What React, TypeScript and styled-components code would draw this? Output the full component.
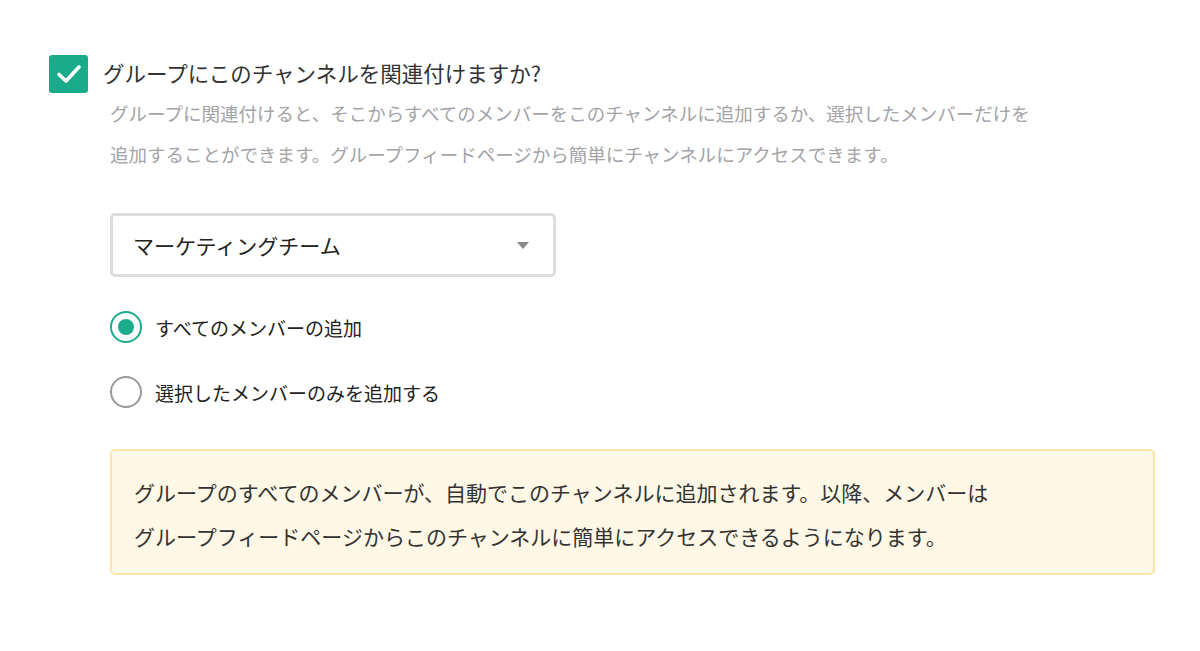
import styled, { createGlobalStyle } from 'styled-components';

const GlobalStyles = createGlobalStyle`
  html, body {
    margin: 0;
    padding: 0;
    background: #ffffff;
  }

  body {
    font-family: "Noto Sans CJK JP", "Noto Sans", sans-serif;
    color: #333333;
  }
`;

const Page = styled.div`
  padding: 55px 0 0 49px;
  width: 1200px;
  box-sizing: border-box;
`;

const TitleRow = styled.label`
  display: flex;
  align-items: center;
  gap: 15px;
`;

const CheckBox = styled.span`
  width: 39px;
  height: 38px;
  border-radius: 3px;
  background: #1aab8b;
  display: flex;
  align-items: center;
  justify-content: center;
  flex-shrink: 0;
`;

const Title = styled.span`
  font-size: 21.5px;
  color: #333333;
  margin-top: -4px;
`;

const Body = styled.div`
  margin-left: 61px;
`;

const Description = styled.p`
  margin: 0;
  font-size: 18.5px;
  line-height: 41px;
  color: #a3a3a8;
`;

const Select = styled.div`
  margin-top: 38px;
  width: 446px;
  height: 64px;
  box-sizing: border-box;
  border: 3px solid #dddddd;
  border-radius: 5px;
  display: flex;
  align-items: center;
  justify-content: space-between;
  padding: 0 24px 0 20px;
  font-size: 21px;
  color: #222222;
`;

const Caret = styled.span`
  width: 0;
  height: 0;
  border-left: 6px solid transparent;
  border-right: 6px solid transparent;
  border-top: 7px solid #888888;
`;

const RadioList = styled.div`
  display: flex;
  flex-direction: column;
  gap: 33px;
  margin-top: 34px;
`;

const RadioRow = styled.label`
  display: flex;
  align-items: center;
  gap: 13px;
  font-size: 19px;
  color: #222222;
`;

const RadioCircle = styled.span<{ $checked?: boolean }>`
  width: 32px;
  height: 32px;
  box-sizing: border-box;
  border-radius: 50%;
  border: 2px solid ${(p) => (p.$checked ? '#1aab8b' : '#9a9a9a')};
  display: flex;
  align-items: center;
  justify-content: center;
  flex-shrink: 0;

  &::after {
    content: '';
    width: 16px;
    height: 16px;
    border-radius: 50%;
    background: #1aab8b;
    display: ${(p) => (p.$checked ? 'block' : 'none')};
  }
`;

const Notice = styled.div`
  margin-top: 41px;
  width: 1045px;
  box-sizing: border-box;
  background: #fff8e6;
  border: 2px solid #f9e6a8;
  border-radius: 5px;
  padding: 19px 22px 15px 22px;
  font-size: 21px;
  line-height: 44px;
  color: #333333;
`;

function CheckIcon() {
  return (
    <svg width="26" height="22" viewBox="0 0 26 22" fill="none">
      <path d="M3 11.5 L10 18 L23 4" stroke="#ffffff" strokeWidth="3.6" strokeLinecap="round" strokeLinejoin="round" />
    </svg>
  );
}

export default function App() {
  return (
    <>
      <GlobalStyles />
      <Page>
        <TitleRow>
          <CheckBox>
            <CheckIcon />
          </CheckBox>
          <Title>グループにこのチャンネルを関連付けますか?</Title>
        </TitleRow>
        <Body>
          <Description>
            グループに関連付けると、そこからすべてのメンバーをこのチャンネルに追加するか、選択したメンバーだけを
            <br />
            追加することができます。グループフィードページから簡単にチャンネルにアクセスできます。
          </Description>

          <Select>
            <span>マーケティングチーム</span>
            <Caret />
          </Select>

          <RadioList>
            <RadioRow>
              <RadioCircle $checked />
              すべてのメンバーの追加
            </RadioRow>
            <RadioRow>
              <RadioCircle />
              選択したメンバーのみを追加する
            </RadioRow>
          </RadioList>

          <Notice>
            グループのすべてのメンバーが、自動でこのチャンネルに追加されます。以降、メンバーは
            <br />
            グループフィードページからこのチャンネルに簡単にアクセスできるようになります。
          </Notice>
        </Body>
      </Page>
    </>
  );
}
